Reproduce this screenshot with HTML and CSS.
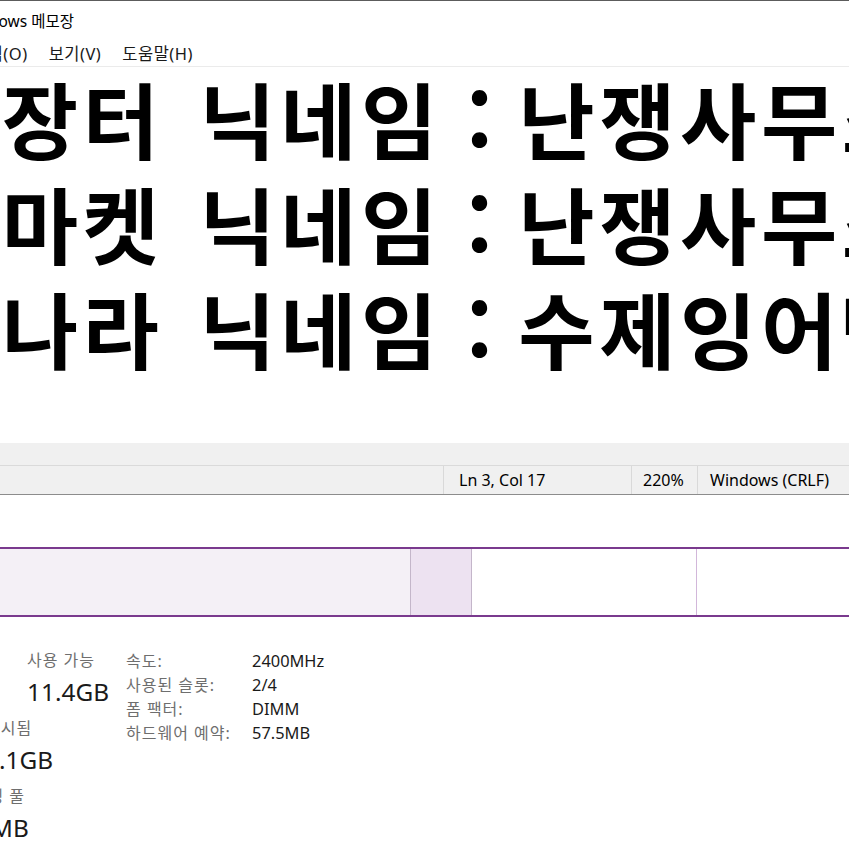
FILE: index.html
```html
<!DOCTYPE html>
<html lang="ko">
<head>
<meta charset="utf-8">
<title>메모장</title>
<link rel="stylesheet" href="styles.css">
</head>
<body>
<div class="notepad">
  <div class="titlebar"><span class="title">Windows 메모장</span></div>
  <div class="menubar">
    <span class="menu first">서식(O)</span>
    <span class="menu">보기(V)</span>
    <span class="menu">도움말(H)</span>
  </div>
  <div class="editor">
    <div class="lines">
      <div class="line">번개장터 닉네임<span class="sep"> : </span>난쟁사무소</div>
      <div class="line">당근마켓 닉네임<span class="sep"> : </span>난쟁사무소</div>
      <div class="line">중고나라 닉네임<span class="sep"> : </span>수제잉어빵</div>
    </div>
  </div>
  <div class="hscroll"></div>
  <div class="statusbar">
    <div class="cell empty"></div>
    <div class="cell pos">Ln 3, Col 17</div>
    <div class="cell zoom">220%</div>
    <div class="cell eol">Windows (CRLF)</div>
  </div>
</div>
<div class="taskmgr">
  <div class="membar">
    <div class="seg inuse"></div>
    <div class="seg modified"></div>
    <div class="seg standby"></div>
    <div class="seg free"></div>
  </div>
  <div class="stats">
    <div class="left">
      <div class="group g1">
        <div class="label">사용 가능</div>
        <div class="value">11.4GB</div>
      </div>
      <div class="group g2">
        <div class="label">캐시됨</div>
        <div class="value">3.1GB</div>
      </div>
      <div class="group g3">
        <div class="label">페이징 풀</div>
        <div class="value">352MB</div>
      </div>
    </div>
    <div class="props">
      <div class="k">속도:</div><div class="v">2400MHz</div>
      <div class="k">사용된 슬롯:</div><div class="v">2/4</div>
      <div class="k">폼 팩터:</div><div class="v">DIMM</div>
      <div class="k">하드웨어 예약:</div><div class="v">57.5MB</div>
    </div>
  </div>
</div>
</body>
</html>
```
FILE: styles.css
```css
* { box-sizing: border-box; margin: 0; padding: 0; }
body {
  width: 849px;
  height: 849px;
  overflow: hidden;
  background: #fff;
  font-family: "Noto Sans", "Noto Sans CJK KR", sans-serif;
  color: #000;
}
.notepad { overflow: hidden; }
.titlebar {
  height: 40px;
  border-top: 1px solid #5c5c5c;
  display: flex;
  align-items: center;
  font-size: 15.5px;
  white-space: nowrap;
  overflow: hidden;
}
.title { margin-left: -39px; }
.menubar {
  height: 27px;
  display: flex;
  align-items: center;
  gap: 21px;
  font-size: 16.5px;
  letter-spacing: 0.5px;
  white-space: nowrap;
  overflow: hidden;
  border-bottom: 1px solid #ebebeb;
  color: #1a1a1a;
}
.menu.first { margin-left: -28px; }
.editor {
  height: 376px;
  overflow: hidden;
}
.lines { margin-top: -2px; }
.line {
  font-family: "Noto Sans CJK KR", sans-serif;
  font-weight: 700;
  font-size: 83px;
  line-height: 105px;
  letter-spacing: 4.5px;
  word-spacing: 8px;
  white-space: nowrap;
  margin-left: -160px;
}
.sep { letter-spacing: 1px; word-spacing: 0; }
.hscroll {
  height: 23px;
  background: #f0f0f0;
  border-bottom: 1px solid #dadada;
}
.statusbar {
  height: 29px;
  background: #f0f0f0;
  border-bottom: 1px solid #8c8c8c;
  display: flex;
  font-size: 16px;
  white-space: nowrap;
}
.cell {
  display: flex;
  align-items: center;
  border-left: 1px solid #d9d9d9;
}
.cell.empty { width: 443px; border-left: none; }
.cell.pos { width: 188px; padding-left: 15px; }
.cell.zoom { width: 66px; padding-left: 11px; }
.cell.eol { flex: 1; padding-left: 12px; }

.taskmgr { padding-top: 52px; }
.membar {
  height: 70px;
  display: flex;
  border-top: 2px solid #7a3a8e;
  border-bottom: 2px solid #7a3a8e;
}
.seg { height: 100%; }
.seg.inuse { width: 410px; background: #f4f0f6; }
.seg.modified {
  width: 62px;
  background: #ede2f1;
  border-left: 1px solid #c4b6ca;
  border-right: 1px solid #c4b6ca;
}
.seg.standby { width: 225px; background: #fff; border-right: 1px solid #d2b7da; }
.seg.free { flex: 1; background: #fff; }

.stats {
  display: flex;
  padding-top: 31px;
  white-space: nowrap;
}
.left { width: 126px; display: flex; flex-direction: column; gap: 4px; }
.label { font-size: 16px; letter-spacing: 1px; line-height: 24px; color: #6e6e6e; }
.value { font-size: 24.4px; line-height: 40px; color: #1a1a1a; }
.g1 { margin-left: 27px; }
.g2 { margin-left: -15px; }
.g3 { margin-left: -43px; }
.g3 .value { margin-left: -8px; }
.props {
  display: grid;
  grid-template-columns: 126px auto;
  grid-auto-rows: 24px;
  align-items: center;
}
.k { font-size: 16px; letter-spacing: 1px; color: #6e6e6e; }
.v { font-size: 16.4px; color: #1a1a1a; }
```
